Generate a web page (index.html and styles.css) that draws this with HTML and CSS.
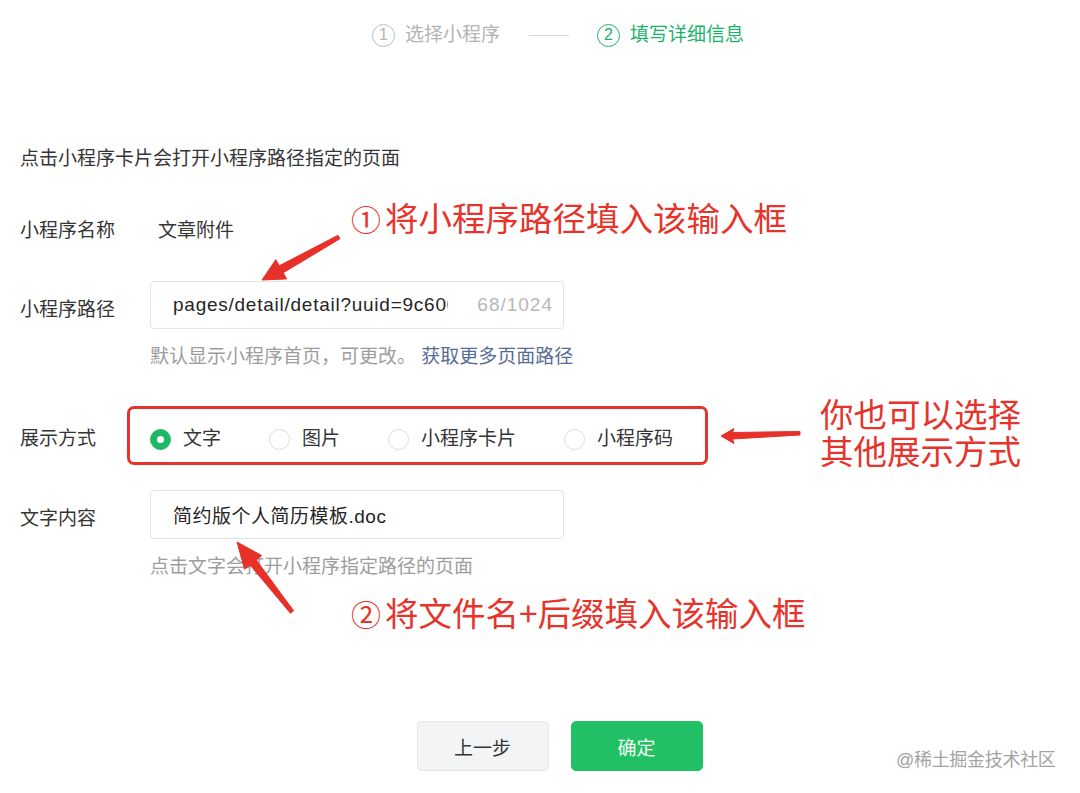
FILE: index.html
```html
<!DOCTYPE html>
<html lang="zh-CN">
<head>
<meta charset="utf-8">
<title>填写详细信息</title>
<link rel="stylesheet" href="styles.css">
</head>
<body>
<div class="page">
  <div class="steps">
    <div class="step">
      <span class="step-num">1</span>
      <span class="step-text">选择小程序</span>
    </div>
    <div class="step-line"></div>
    <div class="step step-active">
      <span class="step-num">2</span>
      <span class="step-text">填写详细信息</span>
    </div>
  </div>

  <div class="form">
    <p class="intro">点击小程序卡片会打开小程序路径指定的页面</p>

    <div class="row row-name">
      <div class="label">小程序名称</div>
      <div class="value">文章附件</div>
    </div>

    <div class="row row-path">
      <div class="label label-input">小程序路径</div>
      <div class="field">
        <div class="input">
          <span class="input-text input-path">pages/detail/detail?uuid=9c600</span>
          <span class="input-count">68/1024</span>
        </div>
        <p class="hint">默认显示小程序首页，可更改。 <a class="link">获取更多页面路径</a></p>
      </div>
    </div>

    <div class="row row-mode">
      <div class="label">展示方式</div>
      <div class="radios">
        <div class="radio radio-on"><span class="radio-dot"></span><span>文字</span></div>
        <div class="radio"><span class="radio-dot"></span><span>图片</span></div>
        <div class="radio"><span class="radio-dot"></span><span>小程序卡片</span></div>
        <div class="radio"><span class="radio-dot"></span><span>小程序码</span></div>
      </div>
    </div>

    <div class="row row-text">
      <div class="label label-input">文字内容</div>
      <div class="field">
        <div class="input input-text-field">
          <span class="input-text">简约版个人简历模板.doc</span>
        </div>
        <p class="hint">点击文字会打开小程序指定路径的页面</p>
      </div>
    </div>
  </div>

  <div class="actions">
    <button class="btn btn-default">上一步</button>
    <button class="btn btn-primary">确定</button>
  </div>

  <div class="watermark">@稀土掘金技术社区</div>

  <div class="mark-box"></div>
  <div class="note note-1"><span class="note-num">①</span>将小程序路径填入该输入框</div>
  <div class="note note-2"><span class="note-num">②</span>将文件名+后缀填入该输入框</div>
  <div class="note note-3">你也可以选择<br>其他展示方式</div>

  <svg class="arrows" width="1080" height="793" viewBox="0 0 1080 793">
    <polygon points="262,280 286.6,278.9 283.2,272.8 340,238.7 338,235.3 279.2,265.8 275.8,259.7"/>
    <polygon points="237,542 244.5,569.2 250,564.9 290.4,613.2 293.6,610.8 256.2,559.9 261.7,555.6"/>
    <polygon points="721,436 734,428.5 732.5,432.5 800,431.5 800,435 732.5,439 734,443.5"/>
  </svg>
</div>
</body>
</html>
```

FILE: styles.css
```css
* { box-sizing: border-box; }

html, body {
  margin: 0;
  padding: 0;
  background: #ffffff;
}

body {
  font-family: "Liberation Sans", "Noto Sans CJK SC", sans-serif;
  font-size: 19px;
  color: #353535;
}

.page {
  position: relative;
  width: 1080px;
  height: 793px;
  overflow: hidden;
}

/* ---------- stepper ---------- */
.steps {
  display: flex;
  align-items: center;
  padding-top: 23px;
  padding-left: 372px;
  height: 47px;
}

.step {
  display: flex;
  align-items: center;
  gap: 10px;
  color: #b4b4b4;
  line-height: 24px;
}

.step-num {
  width: 23px;
  height: 23px;
  border: 1.5px solid #bcbcbc;
  border-radius: 50%;
  display: flex;
  align-items: center;
  justify-content: center;
  font-size: 16px;
  line-height: 1;
}

.step-line {
  width: 40px;
  height: 1px;
  background: #d6d6d6;
  margin: 0 28px 0 29px;
}

.step-active { color: #1bb26a; }
.step-active .step-num { border-color: #1bb26a; }

/* ---------- form ---------- */
.form {
  padding-left: 20px;
}

.intro {
  margin: 99px 0 0;
  line-height: 26px;
}

.row {
  display: flex;
  align-items: flex-start;
}

.label {
  width: 130px;
  flex: none;
  line-height: 26px;
}

.label-input { padding-top: 16px; }

.row-name { margin-top: 46px; }
.row-name .value { line-height: 26px; padding-left: 8px; }

.row-path { margin-top: 37px; }

.field { width: 414px; }

.input {
  height: 48px;
  border: 1px solid #e3e3e3;
  border-radius: 4px;
  display: flex;
  align-items: center;
  padding: 0 10px 0 22px;
  gap: 29px;
  background: #fff;
}

.input-text {
  flex: 1;
  min-width: 0;
  white-space: nowrap;
  overflow: hidden;
  color: #252525;
  letter-spacing: 0.5px;
}

.input-path { letter-spacing: 0.75px; }

.input-count {
  color: #b8b8b8;
  flex: none;
  letter-spacing: 1px;
}

.input-text-field { height: 49px; }

.hint {
  margin: 15px 0 0;
  line-height: 26px;
  color: #9d9d9d;
  white-space: nowrap;
}

.link { color: #576b95; }

.row-mode {
  margin-top: 56px;
  align-items: center;
}

.radios {
  display: flex;
  align-items: center;
}

.radio {
  display: flex;
  align-items: center;
  gap: 12px;
  line-height: 26px;
  margin-right: 48px;
}

.radio-dot {
  width: 21px;
  height: 21px;
  border-radius: 50%;
  border: 1px solid #dcdcdc;
  flex: none;
  display: flex;
  align-items: center;
  justify-content: center;
}

.radio-on .radio-dot {
  background: #1fb865;
  border-color: #1fb865;
}

.radio-on .radio-dot::after {
  content: "";
  width: 7px;
  height: 7px;
  border-radius: 50%;
  background: #fff;
}

.row-text { margin-top: 38px; }

/* ---------- buttons ---------- */
.actions {
  display: flex;
  justify-content: center;
  gap: 22px;
  padding-left: 39px;
  margin-top: 141px;
}

.btn {
  width: 132px;
  height: 50px;
  border-radius: 5px;
  font-family: inherit;
  font-size: 19px;
  cursor: pointer;
}

.btn-default {
  background: #f3f4f6;
  border: 1px solid #e4e4e4;
  color: #353535;
}

.btn-primary {
  background: #22c064;
  border: 1px solid #22c064;
  color: #f2fff6;
}

.watermark {
  position: absolute;
  left: 896px;
  top: 749px;
  font-size: 18px;
  line-height: 22px;
  color: #a3a3a3;
  letter-spacing: -0.3px;
}

/* ---------- annotations ---------- */
.mark-box {
  position: absolute;
  left: 127px;
  top: 406px;
  width: 581px;
  height: 59px;
  border: 3px solid #e6342c;
  border-radius: 7px;
}

.note {
  position: absolute;
  color: #e6342c;
  font-family: "Noto Sans CJK SC", sans-serif;
  font-size: 33.5px;
  white-space: nowrap;
}

.note-num {
  font-size: 30px;
  margin-right: 4px;
}

.note-1 { left: 351px; top: 196px; line-height: 42px; }
.note-2 { left: 351px; top: 591px; line-height: 42px; }
.note-3 { left: 820px; top: 394px; line-height: 37px; }

.arrows {
  position: absolute;
  left: 0;
  top: 0;
  pointer-events: none;
  fill: #e8302a;
  stroke: #e8302a;
  stroke-width: 1;
  stroke-linejoin: round;
}
```
